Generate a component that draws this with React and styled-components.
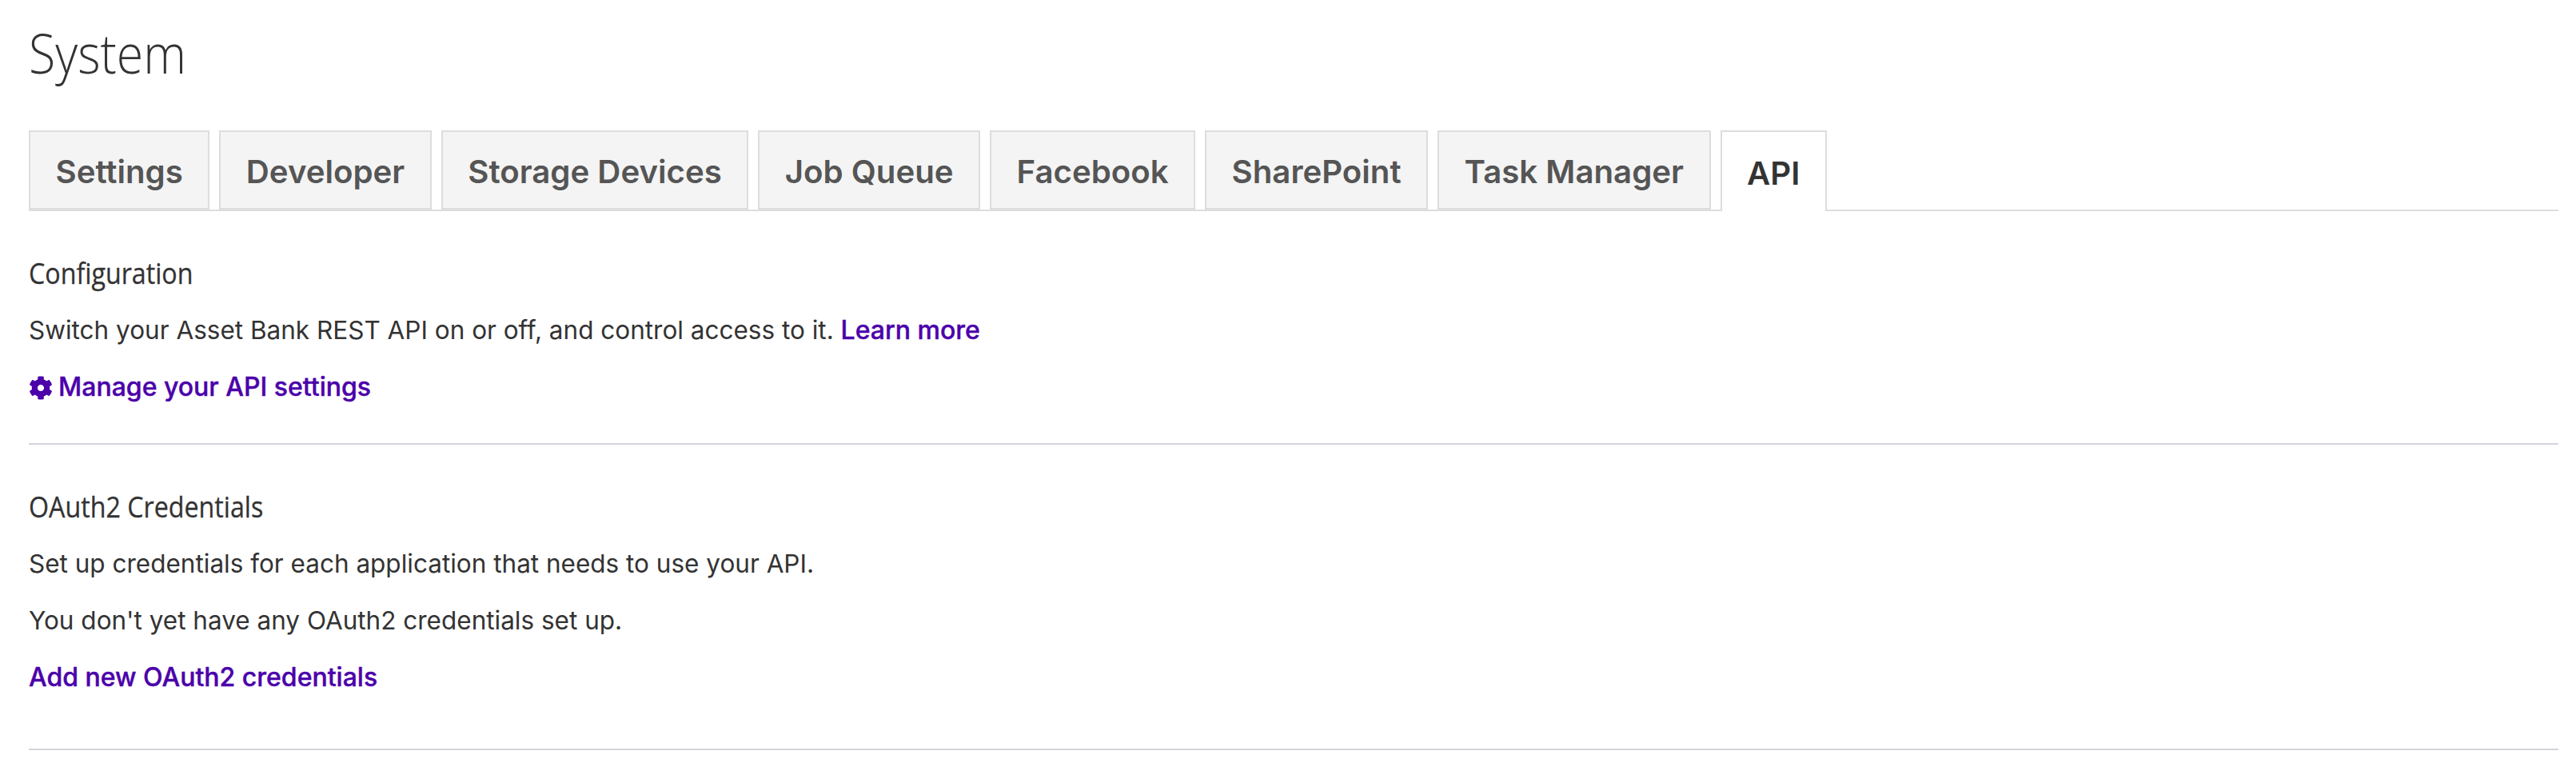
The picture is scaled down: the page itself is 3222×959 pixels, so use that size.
import React from 'react';
import styled, { createGlobalStyle } from 'styled-components';

const GlobalStyle = createGlobalStyle`
  html, body {
    margin: 0;
    padding: 0;
    background: #fff;
    color: #333;
    font-family: Inter, "Noto Sans", sans-serif;
  }
`;

const Page = styled.div`
  padding: 0 22px 0 36px;
  height: 959px;
  box-sizing: border-box;
  overflow: hidden;
`;

const Title = styled.h1`
  margin: 0;
  padding-top: 30px;
  height: 163px;
  box-sizing: border-box;
  font-family: "Open Sans", Roboto, sans-serif;
  font-weight: 300;
  font-size: 68px;
  line-height: 72px;
  color: #333;
  transform: scaleX(0.895);
  transform-origin: left center;
`;

const TabBar = styled.div`
  display: flex;
  gap: 12px;
  height: 101px;
  box-sizing: border-box;
  border-bottom: 2px solid #ddd;
`;

const Tab = styled.a`
  display: flex;
  align-items: center;
  height: ${props => (props.$active ? '101px' : '99px')};
  padding: 3px 31.5px 0;
  box-sizing: border-box;
  border: 2px solid #ddd;
  border-bottom: ${props => (props.$active ? '0' : '2px solid #ddd')};
  background: ${props => (props.$active ? '#fff' : '#f4f4f4')};
  color: ${props => (props.$active ? '#333' : '#555')};
  font-size: 40.2px;
  font-weight: 600;
`;

const Section = styled.section`
  padding-top: 56px;
  height: ${props => props.$height}px;
  box-sizing: border-box;
  border-bottom: 2px solid #d4d4dc;
`;

const Heading = styled.h2`
  margin: 0 0 28px;
  font-family: "Open Sans", Roboto, sans-serif;
  font-weight: 500;
  font-size: 36px;
  line-height: 44px;
  color: #333;
  -webkit-text-stroke: 0.3px #333;
  transform: scaleX(0.895);
  transform-origin: left center;
`;

const Text = styled.p`
  margin: 0 0 30px;
  font-size: 31.5px;
  line-height: 41px;
  color: #333;
`;

const Link = styled.a`
  color: #4b00aa;
  font-weight: 500;
  font-size: 32px;
  -webkit-text-stroke: 0.4px #4b00aa;
`;

const GearIcon = styled.svg`
  width: 30px;
  height: 30px;
  margin-right: 7px;
  vertical-align: -5px;
  fill: #4b00aa;
`;

const tabs = ['Settings', 'Developer', 'Storage Devices', 'Job Queue', 'Facebook', 'SharePoint', 'Task Manager', 'API'];

export default function App() {
  return (
    <Page>
      <GlobalStyle />
      <Title>System</Title>
      <TabBar>
        {tabs.map(t => (
          <Tab key={t} $active={t === 'API'}>{t}</Tab>
        ))}
      </TabBar>
      <Section $height={292}>
        <Heading>Configuration</Heading>
        <Text>
          Switch your Asset Bank REST API on or off, and control access to it. <Link>Learn more</Link>
        </Text>
        <Text>
          <Link>
            <GearIcon viewBox="0 0 512 512">
              <path d="M487.4 315.7l-42.6-24.6c4.3-23.2 4.3-47 0-70.2l42.6-24.6c4.9-2.8 7.1-8.6 5.5-14-11.1-35.6-30-67.8-54.7-94.6-3.8-4.1-10-5.1-14.8-2.3L380.8 110c-17.9-15.4-38.5-27.3-60.8-35.1V25.8c0-5.6-3.9-10.5-9.4-11.7-36.7-8.2-74.3-7.8-109.2 0-5.5 1.2-9.4 6.1-9.4 11.7V75c-22.2 7.9-42.8 19.8-60.8 35.1L88.7 85.5c-4.9-2.8-11-1.9-14.8 2.3-24.7 26.7-43.6 58.9-54.7 94.6-1.7 5.4.6 11.2 5.5 14L67.3 221c-4.3 23.2-4.3 47 0 70.2l-42.6 24.6c-4.9 2.8-7.1 8.6-5.5 14 11.1 35.6 30 67.8 54.7 94.6 3.8 4.1 10 5.1 14.8 2.3l42.6-24.6c17.9 15.4 38.5 27.3 60.8 35.1v49.2c0 5.6 3.9 10.5 9.4 11.7 36.7 8.2 74.3 7.8 109.2 0 5.5-1.2 9.4-6.1 9.4-11.7v-49.2c22.2-7.9 42.8-19.8 60.8-35.1l42.6 24.6c4.9 2.8 11 1.9 14.8-2.3 24.7-26.7 43.6-58.9 54.7-94.6 1.5-5.5-.7-11.3-5.6-14.1zM256 326c-38.6 0-70-31.4-70-70s31.4-70 70-70 70 31.4 70 70-31.4 70-70 70z" />
            </GearIcon>
            Manage your API settings
          </Link>
        </Text>
      </Section>
      <Section $height={382}>
        <Heading>OAuth2 Credentials</Heading>
        <Text>Set up credentials for each application that needs to use your API.</Text>
        <Text>You don't yet have any OAuth2 credentials set up.</Text>
        <Text>
          <Link>Add new OAuth2 credentials</Link>
        </Text>
      </Section>
    </Page>
  );
}
